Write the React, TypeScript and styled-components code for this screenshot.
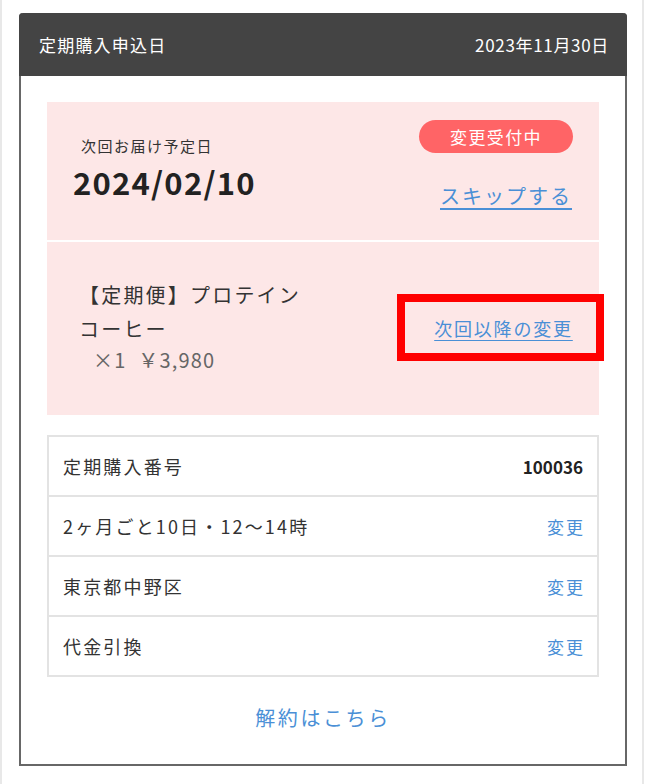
import styled, { createGlobalStyle } from "styled-components";

const GlobalStyle = createGlobalStyle`
  html, body {
    margin: 0;
    padding: 0;
    background: #fff;
  }
  body {
    font-family: "Noto Sans CJK JP", "Noto Sans", sans-serif;
    color: #333;
  }
`;

const Page = styled.div`
  box-sizing: border-box;
  width: 644px;
  height: 784px;
  border-left: 2px solid #e8e8e8;
  border-right: 2px solid #e8e8e8;
  padding: 13px 0 0 17px;
`;

const Card = styled.section`
  box-sizing: border-box;
  width: 608px;
  height: 753px;
  border: 2px solid #676767;
  border-top: none;
  border-radius: 4px 4px 0 0;
  background: #fff;
`;

const Header = styled.header`
  display: flex;
  justify-content: space-between;
  align-items: center;
  height: 63px;
  margin: 0 -2px;
  padding: 0 19px 0 20px;
  background: #444;
  border-radius: 4px 4px 0 0;
  color: #fff;
  font-size: 17px;
  letter-spacing: 0.07em;
`;

const HeaderDate = styled.span`
  margin-right: -1px;
  letter-spacing: 0.04em;
`;

const Body = styled.div`
  padding: 26px 26px 0;
`;

const Delivery = styled.div`
  background: #fde7e7;
`;

const TopRow = styled.div`
  box-sizing: border-box;
  display: flex;
  justify-content: space-between;
  height: 140px;
  padding: 0 26px;
  border-bottom: 2px solid #fff;
`;

const DateBlock = styled.div`
  display: flex;
  flex-direction: column;
  padding-top: 32px;
`;

const Label = styled.span`
  padding-left: 8px;
  font-size: 15px;
  line-height: 24px;
  letter-spacing: 0.1em;
  color: #333;
`;

const BigDate = styled.span`
  margin-top: 3px;
  font-size: 31px;
  font-weight: 700;
  line-height: 42px;
  letter-spacing: 0.04em;
  color: #222;
`;

const Side = styled.div`
  display: flex;
  flex-direction: column;
  align-items: flex-end;
  padding-top: 18px;
`;

const Badge = styled.span`
  display: inline-flex;
  align-items: center;
  justify-content: center;
  width: 154px;
  height: 33px;
  border-radius: 17px;
  background: #ff6466;
  color: #fff;
  font-size: 17px;
  letter-spacing: 0.08em;
`;

const Link = styled.a<{ $size: number }>`
  color: #4a8fd6;
  font-size: ${(p) => p.$size}px;
  letter-spacing: 0.1em;
  text-decoration: underline;
  text-underline-offset: 4px;
  cursor: pointer;
`;

const SkipLink = styled(Link)`
  margin-top: 28px;
  margin-right: 1px;
`;

const ProductRow = styled.div`
  box-sizing: border-box;
  display: flex;
  justify-content: space-between;
  align-items: center;
  height: 173px;
  padding: 0 26px 0 32px;
`;

const ProductName = styled.div`
  width: 236px;
  margin-top: -6px;
  font-size: 20px;
  line-height: 34px;
  letter-spacing: 0.11em;
  color: #333;
`;

const Qty = styled.div`
  padding-left: 14px;
  line-height: 28px;
  color: #666;
  letter-spacing: 0.06em;
  word-spacing: 6px;
`;

const Highlight = styled.div`
  position: relative;
  display: flex;
  align-items: center;
  justify-content: center;
  box-sizing: border-box;
  width: 207px;
  height: 67px;
  margin-right: -31px;
  margin-top: -2px;
  border: 8px solid #ff0000;
  padding-left: 6px;
`;

const Table = styled.div`
  margin-top: 20px;
  border: 2px solid #e3e3e3;
`;

const Row = styled.div`
  display: flex;
  justify-content: space-between;
  align-items: center;
  height: 58px;
  padding: 0 14px;
  font-size: 18px;
  letter-spacing: 0.12em;
  color: #333;
  & + & {
    border-top: 2px solid #e3e3e3;
  }
`;

const Value = styled.span<{ $link?: boolean }>`
  color: ${(p) => (p.$link ? "#4a8fd6" : "#222")};
  font-size: 17px;
  font-weight: ${(p) => (p.$link ? 400 : 700)};
  letter-spacing: ${(p) => (p.$link ? "0.12em" : "0")};
  margin-right: ${(p) => (p.$link ? "-2px" : "0")};
  cursor: ${(p) => (p.$link ? "pointer" : "default")};
`;

const Cancel = styled.div`
  padding-top: 26px;
  text-align: center;
  font-size: 20px;
  letter-spacing: 0.13em;
  color: #4a8fd6;
`;

const rows = [
  { label: "定期購入番号", value: "100036", link: false },
  { label: "2ヶ月ごと10日・12〜14時", value: "変更", link: true },
  { label: "東京都中野区", value: "変更", link: true },
  { label: "代金引換", value: "変更", link: true },
];

export default function App() {
  return (
    <>
      <GlobalStyle />
      <Page>
        <Card>
          <Header>
            <span>定期購入申込日</span>
            <HeaderDate>2023年11月30日</HeaderDate>
          </Header>
          <Body>
            <Delivery>
              <TopRow>
                <DateBlock>
                  <Label>次回お届け予定日</Label>
                  <BigDate>2024/02/10</BigDate>
                </DateBlock>
                <Side>
                  <Badge>変更受付中</Badge>
                  <SkipLink $size={20}>スキップする</SkipLink>
                </Side>
              </TopRow>
              <ProductRow>
                <ProductName>
                  【定期便】プロテインコーヒー
                  <Qty>×1 ￥3,980</Qty>
                </ProductName>
                <Highlight>
                  <Link $size={18}>次回以降の変更</Link>
                </Highlight>
              </ProductRow>
            </Delivery>
            <Table>
              {rows.map((r) => (
                <Row key={r.label}>
                  <span>{r.label}</span>
                  <Value $link={r.link}>{r.value}</Value>
                </Row>
              ))}
            </Table>
            <Cancel>解約はこちら</Cancel>
          </Body>
        </Card>
      </Page>
    </>
  );
}
